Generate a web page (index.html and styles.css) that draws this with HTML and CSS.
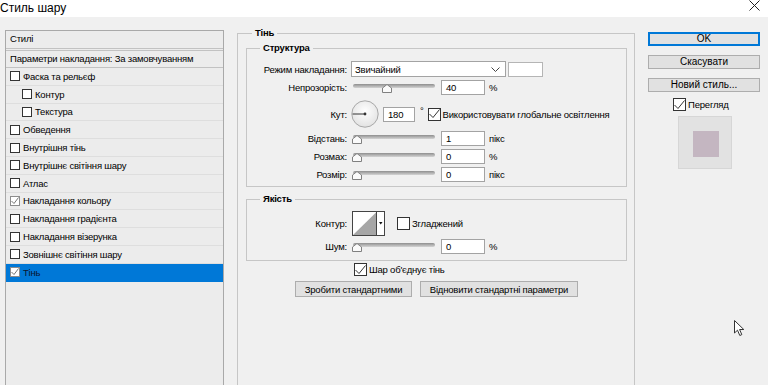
FILE: index.html
```html
<!DOCTYPE html>
<html lang="uk">
<head>
    <meta charset="UTF-8">
    <title>Стиль шару</title>
    <link rel="stylesheet" href="styles.css">
</head>
<body>

    <div class="titlebar">
        <span class="title">Стиль шару</span>
        <svg class="close" width="11" height="11" viewBox="0 0 11 11">
            <path d="M0.5 0.5 L10.5 10.5 M10.5 0.5 L0.5 10.5" stroke="#222" stroke-width="1" fill="none"/>
        </svg>
    </div>

    <div class="dialog">

        <!-- list of layer effects -->
        <div class="styles-list">
            <div class="list-head">Стилі</div>
            <div class="list-head blend">Параметри накладання: За замовчуванням</div>
            <div class="list-item"><span class="cb"></span>Фаска та рельєф</div>
            <div class="list-item sub"><span class="cb"></span>Контур</div>
            <div class="list-item sub"><span class="cb"></span>Текстура</div>
            <div class="list-item"><span class="cb"></span>Обведення</div>
            <div class="list-item"><span class="cb"></span>Внутрішня тінь</div>
            <div class="list-item"><span class="cb"></span>Внутрішнє світіння шару</div>
            <div class="list-item"><span class="cb"></span>Атлас</div>
            <div class="list-item"><span class="cb on"><svg width="8" height="8" viewBox="0 0 8 8"><path d="M0.5 4 L3 6.5 L7.5 0.5" stroke="#777" fill="none"/></svg></span>Накладання кольору</div>
            <div class="list-item"><span class="cb"></span>Накладання градієнта</div>
            <div class="list-item"><span class="cb"></span>Накладання візерунка</div>
            <div class="list-item"><span class="cb"></span>Зовнішнє світіння шару</div>
            <div class="list-item selected"><span class="cb on"><svg width="8" height="8" viewBox="0 0 8 8"><path d="M0.5 4 L3 6.5 L7.5 0.5" stroke="#777" fill="none"/></svg></span>Тінь</div>
        </div>

        <!-- drop shadow settings -->
        <fieldset class="group outer">
            <legend>Тінь</legend>

            <fieldset class="group inner">
                <legend>Структура</legend>

                <div class="row">
                    <span class="label">Режим накладання:</span>
                    <div class="select">Звичайний
                        <svg class="chev" width="9" height="5" viewBox="0 0 9 5"><path d="M0.5 0.5 L4.5 4.5 L8.5 0.5" stroke="#444" fill="none"/></svg>
                    </div>
                    <div class="swatch"></div>
                </div>

                <div class="row">
                    <span class="label">Непрозорість:</span>
                    <div class="slider"><div class="track"></div><svg class="thumb" style="left:29px" width="10" height="9" viewBox="0 0 10 9"><path d="M0.5 8.5 V4 L5 0.5 L9.5 4 V8.5 Z" fill="#fafafa" stroke="#808080"/></svg></div>
                    <div class="field">40</div>
                    <span class="unit">%</span>
                </div>

                <div class="row angle">
                    <span class="label">Кут:</span>
                    <svg class="dial" width="28" height="28" viewBox="0 0 28 28">
                        <defs>
                            <radialGradient id="dialfill" cx="50%" cy="40%" r="60%">
                                <stop offset="0" stop-color="#ffffff"/>
                                <stop offset="1" stop-color="#e2e2e2"/>
                            </radialGradient>
                        </defs>
                        <circle cx="14" cy="14" r="13.2" fill="url(#dialfill)" stroke="#a8a8a8"/>
                        <line x1="1.5" y1="14" x2="14" y2="14" stroke="#333"/>
                        <circle cx="14" cy="14" r="1.4" fill="#333"/>
                    </svg>
                    <div class="field short">180</div>
                    <span class="degree">°</span>
                    <span class="cb big on"><svg width="11" height="10" viewBox="0 0 11 10"><path d="M0.5 5 L4 8.5 L10.5 0.5" stroke="#333" fill="none"/></svg></span>
                    <span class="cb-label">Використовувати глобальне освітлення</span>
                </div>

                <div class="row">
                    <span class="label">Відстань:</span>
                    <div class="slider"><div class="track"></div><svg class="thumb" style="left:-1px" width="10" height="9" viewBox="0 0 10 9"><path d="M0.5 8.5 V4 L5 0.5 L9.5 4 V8.5 Z" fill="#fafafa" stroke="#808080"/></svg></div>
                    <div class="field">1</div>
                    <span class="unit">пікс</span>
                </div>

                <div class="row">
                    <span class="label">Розмах:</span>
                    <div class="slider"><div class="track"></div><svg class="thumb" style="left:-1px" width="10" height="9" viewBox="0 0 10 9"><path d="M0.5 8.5 V4 L5 0.5 L9.5 4 V8.5 Z" fill="#fafafa" stroke="#808080"/></svg></div>
                    <div class="field">0</div>
                    <span class="unit">%</span>
                </div>

                <div class="row">
                    <span class="label">Розмір:</span>
                    <div class="slider"><div class="track"></div><svg class="thumb" style="left:-1px" width="10" height="9" viewBox="0 0 10 9"><path d="M0.5 8.5 V4 L5 0.5 L9.5 4 V8.5 Z" fill="#fafafa" stroke="#808080"/></svg></div>
                    <div class="field">0</div>
                    <span class="unit">пікс</span>
                </div>
            </fieldset>

            <fieldset class="group inner quality">
                <legend>Якість</legend>

                <div class="row contour-row">
                    <span class="label">Контур:</span>
                    <svg class="contour" width="33" height="25" viewBox="0 0 33 25">
                        <rect x="0.5" y="0.5" width="32" height="24" fill="#fff" stroke="#444"/>
                        <path d="M1 24 L24.5 1 L24.5 24 Z" fill="#a6a6a6"/>
                        <line x1="24.5" y1="0.5" x2="24.5" y2="24.5" stroke="#444"/>
                        <path d="M27 11 L30.5 11 L28.75 13.5 Z" fill="#111"/>
                    </svg>
                    <span class="cb big smooth"></span>
                    <span class="cb-label">Згладжений</span>
                </div>

                <div class="row">
                    <span class="label">Шум:</span>
                    <div class="slider"><div class="track"></div><svg class="thumb" style="left:-1px" width="10" height="9" viewBox="0 0 10 9"><path d="M0.5 8.5 V4 L5 0.5 L9.5 4 V8.5 Z" fill="#fafafa" stroke="#808080"/></svg></div>
                    <div class="field">0</div>
                    <span class="unit">%</span>
                </div>
            </fieldset>

            <div class="merge-row">
                <span class="cb big on"><svg width="11" height="10" viewBox="0 0 11 10"><path d="M0.5 5 L4 8.5 L10.5 0.5" stroke="#333" fill="none"/></svg></span>
                <span class="cb-label">Шар об'єднує тінь</span>
            </div>

            <div class="default-btns">
                <button class="btn make-default">Зробити стандартними</button>
                <button class="btn reset-default">Відновити стандартні параметри</button>
            </div>
        </fieldset>

        <!-- dialog buttons and preview -->
        <div class="side">
            <button class="side-btn ok">OK</button>
            <button class="side-btn">Скасувати</button>
            <button class="side-btn">Новий стиль...</button>
            <div class="preview-row">
                <span class="cb big on"><svg width="11" height="10" viewBox="0 0 11 10"><path d="M0.5 5 L4 8.5 L10.5 0.5" stroke="#333" fill="none"/></svg></span>
                <span class="cb-label">Перегляд</span>
            </div>
            <div class="preview"><div class="preview-swatch"></div></div>
        </div>

    </div>

    <svg class="cursor" width="12" height="17" viewBox="0 0 12 17">
        <path d="M0.5 0.5 L0.5 13 L3.5 10.2 L5.8 15.5 L7.8 14.6 L5.6 9.5 L9.8 9.5 Z" fill="#fff" stroke="#333"/>
    </svg>

</body>
</html>
```

FILE: styles.css
```css
* {
    box-sizing: border-box;
}

body {
    margin: 0;
    width: 768px;
    height: 385px;
    overflow: hidden;
    position: relative;
    background: #f0f0f0;
    font-family: "Liberation Sans", Arial, sans-serif;
    font-size: 9.5px;
    letter-spacing: -0.2px;
    color: #000;
}

/* window title */
.titlebar {
    height: 17px;
    background: #fff;
    display: flex;
    align-items: center;
    justify-content: space-between;
}

.title {
    font-size: 12px;
    letter-spacing: 0;
    margin-top: -2px;
}

.close {
    margin-right: 8px;
    margin-top: -6px;
}

.dialog {
    display: flex;
    align-items: flex-start;
    padding-left: 5px;
}

/* left list */
.styles-list {
    width: 219px;
    height: 360px;
    margin-top: 13px;
    border: 1px solid #a9a9a9;
    background: #ececec;
}

.list-head {
    height: 18px;
    padding: 2px 0 0 4px;
    border-bottom: 1px solid #c2c2c2;
}

.list-head.blend {
    margin-top: 1px;
    border-top: 1px solid #c2c2c2;
}

.list-item {
    height: 17.8px;
    display: flex;
    align-items: center;
    padding-left: 4px;
    border-bottom: 1px solid #dedede;
}

.list-item.sub {
    padding-left: 16px;
}

.list-item.selected {
    background: #0078d7;
    border-bottom-color: #0078d7;
    color: #0b1630;
}

/* checkboxes */
.cb {
    width: 10px;
    height: 10px;
    flex: none;
    margin-right: 3px;
    border: 1px solid #333;
    background: #fff;
    display: flex;
    align-items: center;
    justify-content: center;
}

.cb.on {
    border-color: #8c8c8c;
}

.cb.big {
    width: 13px;
    height: 13px;
    margin-right: 2px;
    border-color: #333;
}

.cb-label {
    white-space: nowrap;
}

/* group boxes */
.group {
    margin: 0;
    padding: 0;
    min-width: 0;
    border: 1px solid #c6c6c6;
}

.group legend {
    padding: 0 3px;
    margin-left: 13px;
    font-weight: bold;
    line-height: 14px;
}

.outer {
    width: 398px;
    height: 360px;
    margin-top: 9px;
    margin-left: 13px;
}

.outer > legend {
    margin-left: 14px;
}

.inner {
    margin: 1px 7px 0 8px;
    padding: 5px 0 3px 0;
}

.inner.quality {
    margin-top: 5px;
    padding: 4px 0 5px 0;
}

.row {
    display: flex;
    align-items: center;
    height: 18px;
}

.row.angle {
    height: 28px;
    margin-top: 4px;
    margin-bottom: 1px;
}

.row.contour-row {
    height: 27px;
}

.label {
    width: 100px;
    margin-right: 4px;
    text-align: right;
    white-space: nowrap;
}

.contour-row .label {
    margin-right: 5px;
}

.select {
    width: 155px;
    height: 16px;
    background: #fff;
    border: 1px solid #a3a3a3;
    padding-left: 3px;
    display: flex;
    align-items: center;
    justify-content: space-between;
}

.chev {
    margin-right: 5px;
}

.swatch {
    width: 35px;
    height: 15px;
    margin-left: 2px;
    background: #fff;
    border: 1px solid #b5b5b5;
}

/* sliders */
.slider {
    position: relative;
    width: 82px;
    height: 10px;
    margin-left: 2px;
}

.track {
    height: 4px;
    margin-top: 2px;
    border-radius: 2px;
    background: linear-gradient(#8e8e8e, #d4d4d4);
}

.thumb {
    position: absolute;
    top: 2px;
}

.field {
    width: 44px;
    height: 15px;
    margin-left: 6px;
    padding-left: 4px;
    line-height: 13px;
    background: #fff;
    border: 1px solid #a3a3a3;
}

.field.short {
    width: 32px;
    margin-left: 4px;
}

.unit {
    margin-left: 4px;
}

.degree {
    margin-left: 5px;
    margin-right: 4px;
    align-self: flex-start;
    margin-top: 5px;
}

.contour {
    flex: none;
}

.smooth {
    margin-left: 12px;
}

.merge-row {
    display: flex;
    align-items: center;
    margin-top: 2px;
    padding-left: 116px;
    height: 13px;
}

.default-btns {
    display: flex;
    gap: 8px;
    margin-top: 5px;
    padding-left: 57px;
}

.btn {
    height: 16px;
    padding: 0;
    font-family: inherit;
    font-size: 9.5px;
    letter-spacing: -0.2px;
    background: #e1e1e1;
    border: 1px solid #adadad;
}

.make-default {
    width: 117px;
}

.reset-default {
    width: 158px;
}

/* right column */
.side {
    width: 112px;
    margin-left: 13px;
    margin-top: 15px;
    display: flex;
    flex-direction: column;
}

.side-btn {
    height: 14px;
    padding: 0;
    margin-bottom: 9px;
    font-family: inherit;
    font-size: 10px;
    line-height: 12px;
    background: #e1e1e1;
    border: 1px solid #adadad;
}

.side-btn.ok {
    border-color: #0078d7;
    box-shadow: inset 0 0 0 1px #0078d7;
}

.preview-row {
    display: flex;
    align-items: center;
    margin-top: -3px;
    padding-left: 25px;
}

.preview {
    width: 54px;
    height: 53px;
    margin-top: 5px;
    margin-left: 30px;
    padding: 14px;
    background: #e2e2e2;
    border: 1px solid #d6d6d6;
}

.preview-swatch {
    width: 26px;
    height: 26px;
    background: #c4b6c1;
}

.cursor {
    position: absolute;
    left: 734px;
    top: 320px;
}
```
